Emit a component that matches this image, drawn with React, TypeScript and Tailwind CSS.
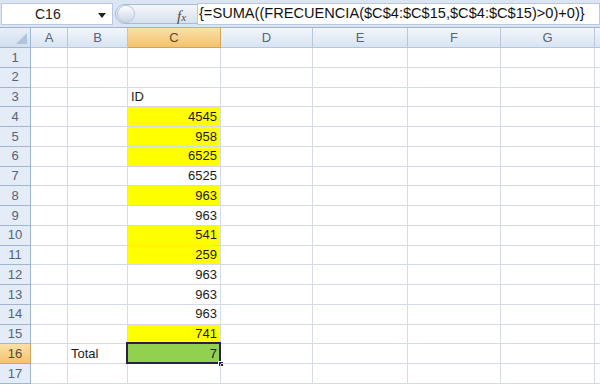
import React from "react";

const cols = [
  { key: "A", w: "w-[37px]" },
  { key: "B", w: "w-[60px]" },
  { key: "C", w: "w-[93px]" },
  { key: "D", w: "w-[92px]" },
  { key: "E", w: "w-[95px]" },
  { key: "F", w: "w-[93px]" },
  { key: "G", w: "w-[94px]" },
  { key: "H", w: "w-[60px]" },
];

type Cell = { text?: string; align?: "l" | "r"; bg?: string };

const data: Record<number, Record<string, Cell>> = {
  3: { C: { text: "ID", align: "l" } },
  4: { C: { text: "4545", bg: "bg-[#ffff00]" } },
  5: { C: { text: "958", bg: "bg-[#ffff00]" } },
  6: { C: { text: "6525", bg: "bg-[#ffff00]" } },
  7: { C: { text: "6525" } },
  8: { C: { text: "963", bg: "bg-[#ffff00]" } },
  9: { C: { text: "963" } },
  10: { C: { text: "541", bg: "bg-[#ffff00]" } },
  11: { C: { text: "259", bg: "bg-[#ffff00]" } },
  12: { C: { text: "963" } },
  13: { C: { text: "963" } },
  14: { C: { text: "963" } },
  15: { C: { text: "741", bg: "bg-[#ffff00]" } },
  16: { B: { text: "Total", align: "l" }, C: { text: "7", bg: "bg-[#92d050]" } },
};

export default function App() {
  const rows = Array.from({ length: 17 }, (_, i) => i + 1);
  return (
    <div
      className="w-[600px] h-[387px] overflow-hidden bg-white relative"
      style={{ fontFamily: '"Liberation Sans", Arial, sans-serif' }}
    >
      {/* formula bar */}
      <div className="h-[28px] flex items-stretch bg-[#dbe5f3] border-b border-[#9fb3cf] pt-[3px] pb-[2px]">
        <div className="w-[112px] bg-white border border-[#b8c8de] flex items-center relative ml-[1px]">
          <span className="text-[14px] text-[#222] ml-[33px]">C16</span>
          <span className="absolute left-[96px] top-[9px] w-0 h-0 border-l-[4px] border-r-[4px] border-t-[5px] border-l-transparent border-r-transparent border-t-[#222]" />
        </div>
        <div className="w-[84px] flex items-center relative">
          <div className="absolute left-[2px] top-[1px] bottom-[1px] right-[-2px] rounded-l-[12px] bg-gradient-to-b from-[#f4f7fb] to-[#d7e1ee] border border-[#a9bbd3]" />
          <div className="absolute left-[4px] top-[2px] w-[18px] h-[18px] rounded-full bg-gradient-to-b from-[#ffffff] to-[#c9d5e6] border border-[#b9c7db]" />
          <span
            className="absolute left-[64px] top-[2px] text-[15px] italic text-[#4a4a4a]"
            style={{ fontFamily: '"Liberation Serif", serif' }}
          >
            f<span className="text-[11px]">x</span>
          </span>
        </div>
        <div className="flex-1 bg-white border border-[#b8c8de] flex items-center pl-[1px] relative">
          <span className="text-[14.6px] text-[#111] whitespace-nowrap">
            {"{=SUMA((FRECUENCIA($C$4:$C$15,$C$4:$C$15)>0)+0)}"}
          </span>
        </div>
      </div>

      {/* header row */}
      <div className="flex h-[20px]">
        <div className="w-[31px] shrink-0 border-r border-b border-[#9eb6ce] bg-gradient-to-b from-[#e9eff8] to-[#d2deee] relative">
          <svg className="absolute right-[3px] bottom-[3px]" width="11" height="11" viewBox="0 0 11 11">
            <polygon points="11,0 11,11 0,11" fill="#b2c4dc" />
          </svg>
        </div>
        {cols.map((c) => (
          <div
            key={c.key}
            className={`${c.w} shrink-0 border-r border-b flex items-center justify-center text-[13px] ${
              c.key === "C"
                ? "bg-gradient-to-b from-[#fbe0a8] to-[#f4c36b] border-[#d1a65a] text-[#5a4a30]"
                : "bg-gradient-to-b from-[#f3f6fb] to-[#d9e4f2] border-[#b6c7dc] text-[#55647a]"
            }`}
          >
            {c.key === "H" ? "" : c.key}
          </div>
        ))}
      </div>

      {/* rows */}
      {rows.map((r) => (
        <div key={r} className="flex h-[19.75px]">
          <div
            className={`w-[31px] shrink-0 border-r border-b flex items-center justify-center text-[13px] ${
              r === 16
                ? "bg-gradient-to-b from-[#fbe0a8] to-[#f4c36b] border-[#d1a65a] text-[#5a4a30]"
                : "bg-[#e4ecf7] border-[#9eb6ce] text-[#55647a]"
            }`}
          >
            {r}
          </div>
          {cols.map((c) => {
            const cell = data[r]?.[c.key];
            const selected = r === 16 && c.key === "C";
            return (
              <div
                key={c.key}
                className={`${c.w} shrink-0 border-r border-b border-[#d4dbe7] flex items-center text-[13px] text-[#1a1a1a] relative ${
                  cell?.bg ?? ""
                } ${cell?.align === "l" ? "justify-start pl-[3px]" : "justify-end pr-[3px]"}`}
              >
                {cell?.text}
                {selected && (
                  <>
                    <div className="absolute left-[-2px] top-[-2px] right-[-1px] bottom-[-1px] border-2 border-[#2a1f4a]" />
                    <div className="absolute right-[-4px] bottom-[-4px] w-[6px] h-[6px] bg-[#2a1f4a] border border-white" />
                  </>
                )}
              </div>
            );
          })}
        </div>
      ))}
    </div>
  );
}
